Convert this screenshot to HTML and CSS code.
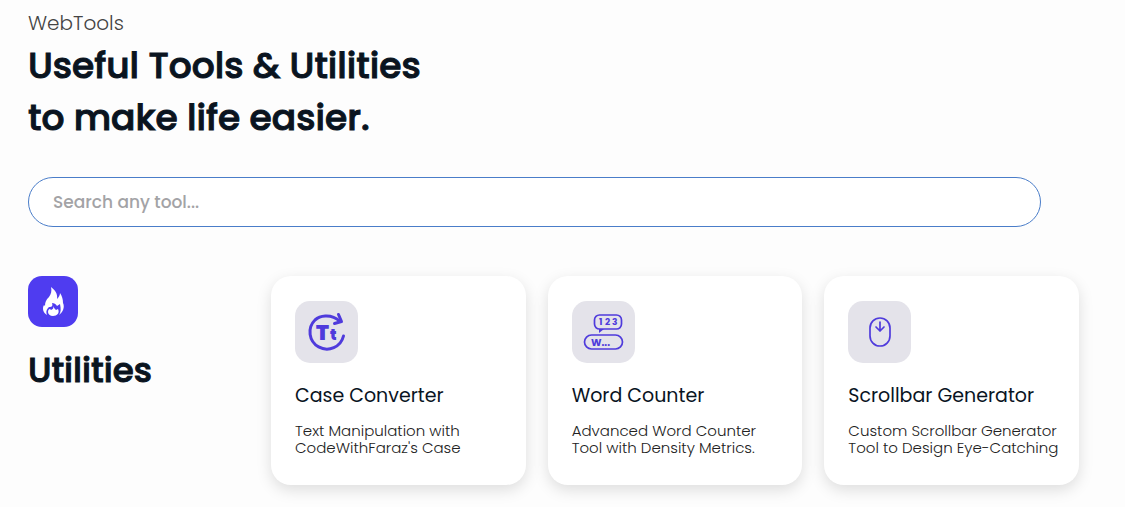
FILE: index.html
```
<!DOCTYPE html>
<html lang="en">

<head>
    <meta charset="UTF-8">
    <meta name="viewport" content="width=device-width, initial-scale=1.0">
    <title>WebTools</title>
    <link rel="stylesheet" href="styles.css">
</head>

<body>
    <header class="hero">
        <p class="brand">WebTools</p>
        <h1>Useful Tools &amp; Utilities<br>to make life easier.</h1>
        <input class="search" type="search" placeholder="Search any tool..." aria-label="Search any tool">
    </header>

    <main class="section">
        <div class="category">
            <span class="badge">
                <svg width="50" height="50" viewBox="0 0 50 50" aria-hidden="true">
                    <path fill="#fff" d="M23 11C27 14 30 18 29 23C31 21 32 19 32 17C34 20 35 23 35 27C37 31 35 36 31 39C33 36 33 33 32 28L29 30C28 28 26 27 24 27C25 30 24 31 21 31L20 32C18 34 18 37 19 39C15 37 14 32 16 29L17 30C17 26 18 24 21 21C23 18 24 15 23 11Z" />
                    <path fill="#fff" d="M25 30C26 32 27 33 28 34L30 33C32 37 29 40 25 40C22 40 20 38 20 36C20 34 21 33 22 33L23 34C25 33 26 32 25 30Z" />
                </svg>
            </span>
            <h2>Utilities</h2>
        </div>

        <div class="cards">
            <a class="card" href="#">
                <span class="icon">
                    <svg width="62" height="62" viewBox="0 0 62 62" aria-hidden="true">
                        <g fill="none" stroke="#4f3bdc" stroke-width="3" stroke-linecap="round" stroke-linejoin="round">
                            <path d="M45 20.500C35 11.500 24 15.500 20 19A17 17 0 1 0 48.500 35" />
                            <path d="M43.500 13.500L46.500 20.500L39.500 22.500" />
                        </g>
                        <text class="glyph heavy" x="21" y="39" font-size="21">T</text>
                        <text class="glyph heavy" x="35" y="39" font-size="15">t</text>
                    </svg>
                </span>
                <h3>Case Converter</h3>
                <p>Text Manipulation with CodeWithFaraz's Case</p>
            </a>

            <a class="card" href="#">
                <span class="icon">
                    <svg width="62" height="62" viewBox="0 0 62 62" aria-hidden="true">
                        <g fill="none" stroke="#4f3bdc" stroke-width="1.700" stroke-linejoin="round">
                            <rect x="22.500" y="14" width="27" height="14" rx="5" />
                            <rect x="12.500" y="34" width="38" height="14" rx="7" />
                        </g>
                        <path fill="#4f3bdc" d="M27 28V32L32 28Z" />
                        <text class="glyph" x="27" y="24" font-size="9">1</text>
                        <text class="glyph" x="33" y="24" font-size="9">2</text>
                        <text class="glyph" x="40" y="24" font-size="9">3</text>
                        <text class="glyph" x="19" y="45" font-size="10">W...</text>
                    </svg>
                </span>
                <h3>Word Counter</h3>
                <p>Advanced Word Counter<br>Tool with Density Metrics.</p>
            </a>

            <a class="card" href="#">
                <span class="icon">
                    <svg width="62" height="62" viewBox="0 0 62 62" aria-hidden="true">
                        <g fill="none" stroke="#4f3bdc" stroke-width="1.700" stroke-linecap="round" stroke-linejoin="round">
                            <rect x="22" y="17" width="20" height="28" rx="10" />
                            <path d="M32 21V30M28 26L32 30L36 26" />
                        </g>
                    </svg>
                </span>
                <h3>Scrollbar Generator</h3>
                <p>Custom Scrollbar Generator Tool to Design Eye-Catching</p>
            </a>
        </div>
    </main>
</body>

</html>
```

FILE: styles.css
```
:root {
    --primary: #4f3cf0;
    --dark: #0a141f;
    --ff: "Poppins", "Inter", sans-serif;
}

* {
    box-sizing: border-box;
    margin: 0;
    padding: 0;
}

body {
    font-family: var(--ff);
    font-weight: 400;
    color: var(--dark);
    background: #fdfdfd;
    padding: 8px 28px 22px;
}

.brand {
    font-size: 20px;
    line-height: 30px;
    font-weight: 300;
    color: #444;
}

h1,
h2 {
    font-weight: 500;
    -webkit-text-stroke: 1px var(--dark);
}

h1 {
    font-size: 36px;
    line-height: 52px;
    margin-top: 2px;
}

.search {
    display: block;
    width: 90vw;
    height: 50px;
    margin-top: 33px;
    padding: 0 24px;
    border: 1px solid #4a7dc9;
    border-radius: 25px;
    background: #fff;
    font-family: var(--ff);
    font-size: 17px;
    font-weight: 500;
    color: var(--dark);
    outline: none;
    appearance: none;
}

.search::placeholder {
    color: #a3a3a6;
}

.section {
    display: flex;
    margin-top: 49px;
    padding-right: 18px;
}

.category {
    flex: 0 0 243px;
}

.badge {
    display: block;
    width: 50px;
    height: 51px;
    border-radius: 14px;
    background: var(--primary);
}

h2 {
    font-size: 34px;
    line-height: 50px;
    margin-top: 18px;
}

.cards {
    flex: 1;
    display: grid;
    grid-template-columns: repeat(3, 1fr);
    gap: 22px;
}

.card {
    display: block;
    padding: 25px 16px 29px 24px;
    border-radius: 20px;
    background: #fff;
    color: var(--dark);
    text-decoration: none;
    box-shadow: 0 5px 15px rgba(0, 0, 0, 0.13);
}

.icon {
    display: block;
    width: 63px;
    height: 62px;
    border-radius: 15px;
    background: #e4e3ea;
}

.glyph {
    fill: #4f3bdc;
    font-weight: 700;
}

.heavy {
    font-weight: 900;
}

.card h3 {
    font-size: 19px;
    line-height: 28px;
    font-weight: 400;
    margin-top: 19px;
}

.card p {
    font-size: 15px;
    line-height: 17px;
    font-weight: 300;
    margin-top: 12px;
    color: #222;
}
```
